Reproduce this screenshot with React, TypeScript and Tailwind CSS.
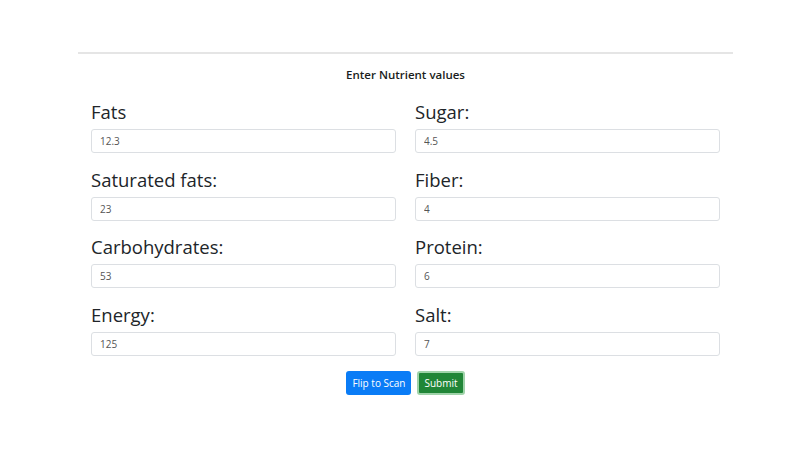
import React from "react";

const fields: { label: string; value: string }[][] = [
  [
    { label: "Fats", value: "12.3" },
    { label: "Sugar:", value: "4.5" },
  ],
  [
    { label: "Saturated fats:", value: "23" },
    { label: "Fiber:", value: "4" },
  ],
  [
    { label: "Carbohydrates:", value: "53" },
    { label: "Protein:", value: "6" },
  ],
  [
    { label: "Energy:", value: "125" },
    { label: "Salt:", value: "7" },
  ],
];

function Field({ label, value }: { label: string; value: string }) {
  return (
    <div className="flex flex-col">
      <label className="h-[30px] text-[18.5px] leading-[30px] text-[#212529]">{label}</label>
      <input
        defaultValue={value}
        className="mt-[2px] h-[24px] w-full rounded-[3px] border border-[#dcdfe3] bg-white px-[8px] text-[10px] text-[#555] outline-none"
      />
    </div>
  );
}

export default function App() {
  return (
    <div
      className="min-h-[460px] w-full bg-white"
      style={{ fontFamily: '"Open Sans", "Noto Sans", sans-serif' }}
    >
      <div className="ml-[78px] w-[655px] pt-[52px]">
        <hr className="border-t-2 border-[#e5e5e5]" />
        <h2 className="mt-[11px] text-center text-[11.5px] font-semibold leading-[20px] text-[#1a1d20]">
          Enter Nutrient values
        </h2>
        <form className="mt-[12px] px-[13px]">
          {fields.map((row, i) => (
            <div key={i} className="mb-[11.5px] grid grid-cols-2 gap-x-[19px]">
              {row.map((f) => (
                <Field key={f.label} label={f.label} value={f.value} />
              ))}
            </div>
          ))}
          {/* buttons */}
          <div className="flex justify-center gap-[6px] pt-[4px]">
            <button
              type="button"
              className="h-[24px] rounded-[3px] bg-[#0a7cf6] px-[6px] text-[10px] text-white"
            >
              Flip to Scan
            </button>
            <button
              type="submit"
              className="h-[24px] rounded-[3px] border-2 border-[#9fd3a9] bg-[#208637] px-[5px] text-[10px] text-white"
            >
              Submit
            </button>
          </div>
        </form>
      </div>
    </div>
  );
}
